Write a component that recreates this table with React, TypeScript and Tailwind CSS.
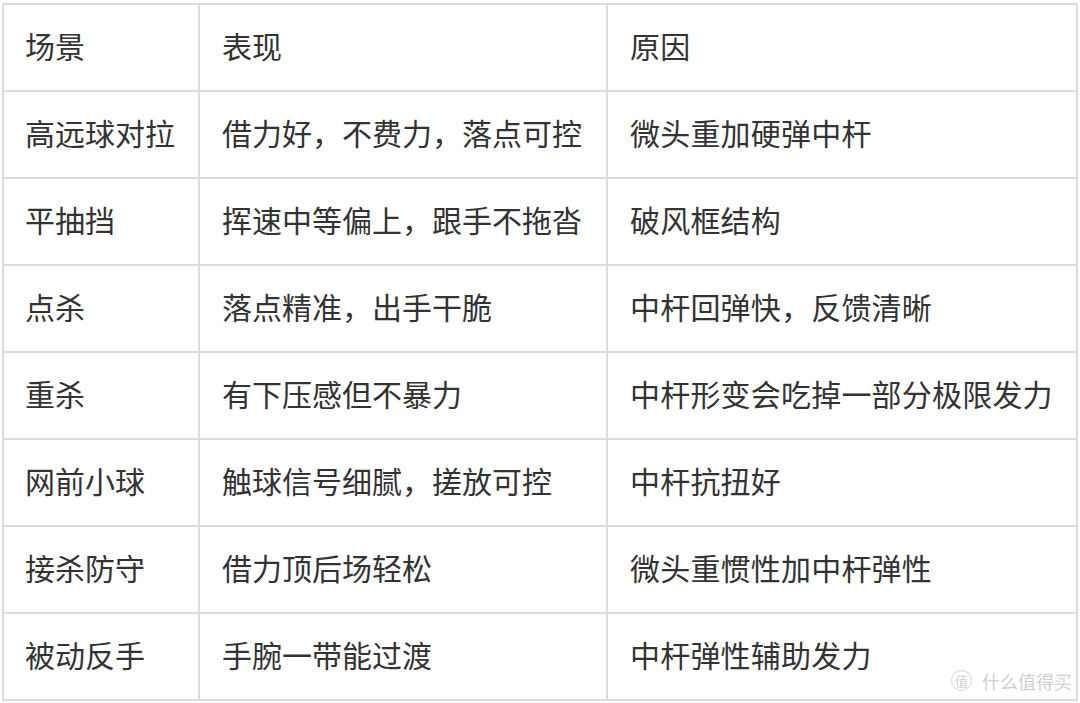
import React from "react";

const rows: [string, string, string][] = [
  ["场景", "表现", "原因"],
  ["高远球对拉", "借力好，不费力，落点可控", "微头重加硬弹中杆"],
  ["平抽挡", "挥速中等偏上，跟手不拖沓", "破风框结构"],
  ["点杀", "落点精准，出手干脆", "中杆回弹快，反馈清晰"],
  ["重杀", "有下压感但不暴力", "中杆形变会吃掉一部分极限发力"],
  ["网前小球", "触球信号细腻，搓放可控", "中杆抗扭好"],
  ["接杀防守", "借力顶后场轻松", "微头重惯性加中杆弹性"],
  ["被动反手", "手腕一带能过渡", "中杆弹性辅助发力"],
];

export default function App() {
  return (
    <div
      className="w-[1080px] h-[703px] bg-white pt-[3px] pl-[2px] relative overflow-hidden"
      style={{ fontFamily: '"Noto Sans CJK SC", "Noto Sans", sans-serif' }}
    >
      <div className="grid grid-cols-[196px_408px_470px] border-l-2 border-t-2 border-[#dcdcdc] w-[1076px]">
        {rows.map((r, i) => (
          <React.Fragment key={i}>
            <div className="h-[87px] border-r-2 border-b-2 border-[#dcdcdc] flex items-center pl-[21px] pb-[6px] text-[30px] leading-none text-[#333] whitespace-nowrap">
              {r[0]}
            </div>
            <div className="h-[87px] border-r-2 border-b-2 border-[#dcdcdc] flex items-center pl-[22px] pb-[6px] text-[30px] leading-none text-[#333] whitespace-nowrap">
              {r[1]}
            </div>
            <div className="h-[87px] border-r-2 border-b-2 border-[#dcdcdc] flex items-center pl-[22px] pb-[6px] text-[30px] tracking-[0.2px] leading-none text-[#333] whitespace-nowrap">
              {r[2]}
            </div>
          </React.Fragment>
        ))}
      </div>
      <div className="absolute left-[951px] top-[670px] flex items-center gap-[10px] text-[#d0d0d0] whitespace-nowrap">
        <div className="w-[21px] h-[21px] shrink-0 rounded-full border border-[#d6d6d6] flex items-center justify-center text-[13px] leading-none">
          值
        </div>
        <div className="text-[18px] leading-none">什么值得买</div>
      </div>
    </div>
  );
}
